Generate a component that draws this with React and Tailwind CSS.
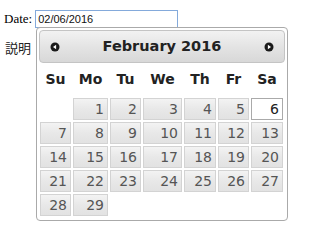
import React from "react";

const cols = "grid grid-cols-[31px_35px_31px_39px_32px_31px_32px] gap-x-[2px]";

function Arrow({ dir }) {
  return (
    <svg width="10" height="10" viewBox="0 0 10 10">
      <circle cx="5" cy="5" r="4.5" fill="#1a1a1a" />
      {dir === "w" ? (
        <path d="M3 5 L6.1 2.8 L6.1 7.2 Z" fill="#fff" />
      ) : (
        <path d="M7 5 L3.9 2.8 L3.9 7.2 Z" fill="#fff" />
      )}
    </svg>
  );
}

export default function App() {
  const days = ["Su", "Mo", "Tu", "We", "Th", "Fr", "Sa"];
  const cells = [null, 1, 2, 3, 4, 5, 6, 7, 8, 9, 10, 11, 12, 13, 14, 15, 16, 17, 18, 19, 20, 21, 22, 23, 24, 25, 26, 27, 28, 29];
  return (
    <div className="relative w-[320px] h-[250px] bg-white overflow-hidden">
      <div className="flex items-center pt-[9px] pl-[4px]">
        <span className="text-[13px] text-black" style={{ fontFamily: '"Liberation Serif", serif' }}>Date:</span>
        <div className="ml-[3px] w-[143px] h-[18px] border border-[#84aadb] flex items-center pl-[2px] text-[11px] text-[#111]" style={{ fontFamily: '"Liberation Sans", Arial, sans-serif' }}>
          02/06/2016
        </div>
      </div>
      <div className="pl-[5px] mt-[9px] text-[13px] text-[#222]" style={{ fontFamily: '"Noto Sans CJK JP", sans-serif' }}>
        説明
      </div>

      <div className="absolute left-[36px] top-[27px] w-[252px] bg-white border border-[#aaaaaa] rounded-[4px] p-[2px] pb-[4px]" style={{ fontFamily: '"DejaVu Sans", Verdana, sans-serif' }}>
        <div className="h-[33px] rounded-[4px] border border-[#c4c4c4] bg-[linear-gradient(to_bottom,#f2f2f2,#e4e4e4_50%,#d8d8d8)] flex items-center justify-between px-[10px]">
          <Arrow dir="w" />
          <span className="text-[14.5px] font-bold text-[#222]">February 2016</span>
          <Arrow dir="e" />
        </div>
        <div className="ml-[1px]">
          <div className={`${cols} h-[33px] items-center`}>
            {days.map((d) => (
              <div key={d} className="text-center text-[14px] font-bold text-[#222]">{d}</div>
            ))}
          </div>
          <div className={`${cols} gap-y-[2px] mt-[2px]`}>
            {cells.map((n, i) =>
              n === null ? (
                <div key={i} className="h-[22px]" />
              ) : n === 6 ? (
                <div key={i} className="h-[22px] border border-[#aaaaaa] bg-white flex items-center justify-end pr-[3px] text-[14px] text-[#212121]">{n}</div>
              ) : (
                <div key={i} className="h-[22px] border border-[#d3d3d3] bg-[linear-gradient(to_bottom,#f3f3f3,#e8e8e8_50%,#e2e2e2)] flex items-center justify-end pr-[3px] text-[14px] text-[#555555]">{n}</div>
              )
            )}
          </div>
        </div>
      </div>
    </div>
  );
}
